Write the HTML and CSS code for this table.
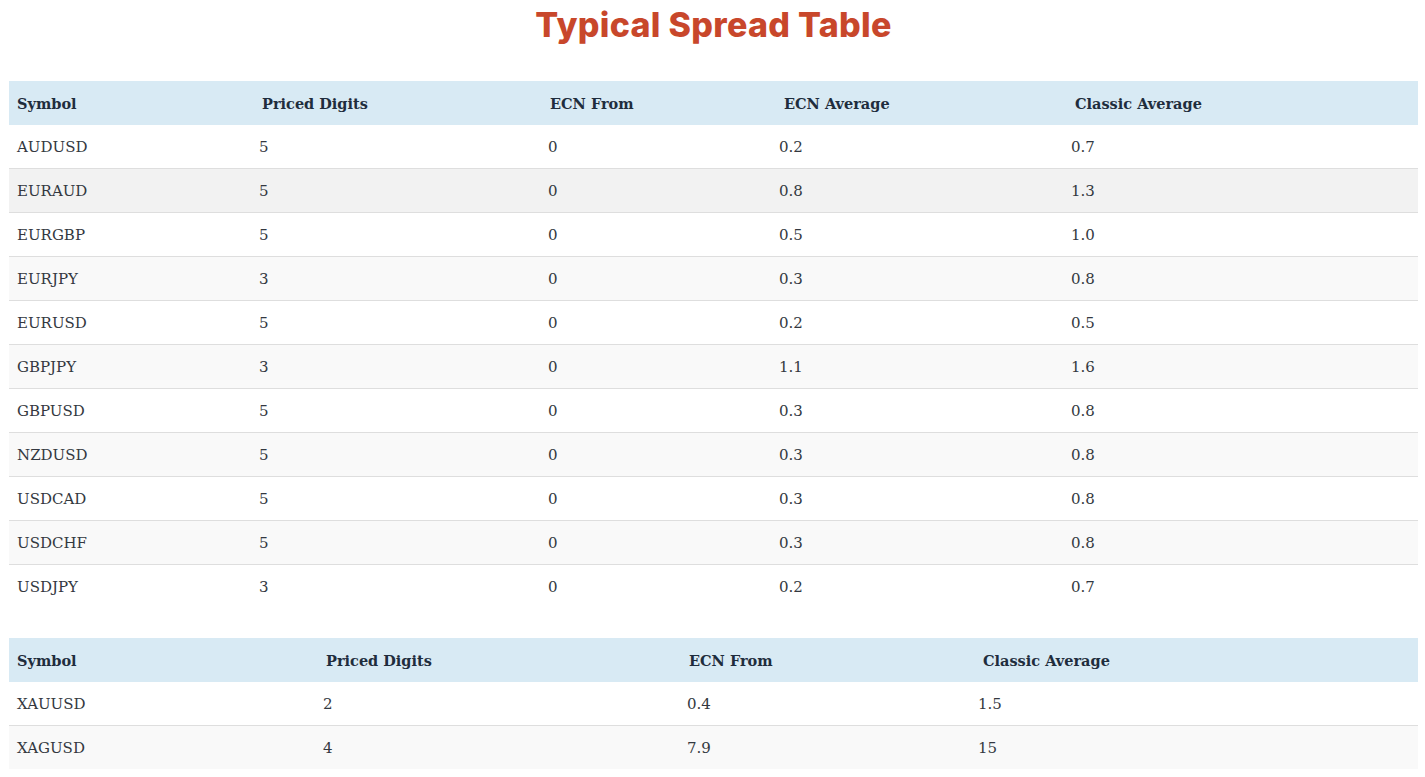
FILE: index.html
```html
<!DOCTYPE html>
<html lang="en">
<head>
<meta charset="utf-8">
<title>Typical Spread Table</title>
<link rel="stylesheet" href="styles.css">
</head>
<body>
<h1 class="title">Typical Spread Table</h1>
<table class="spread spread-fx">
  <thead>
    <tr><th>Symbol</th><th>Priced Digits</th><th>ECN From</th><th>ECN Average</th><th>Classic Average</th></tr>
  </thead>
  <tbody>
    <tr><td>AUDUSD</td><td>5</td><td>0</td><td>0.2</td><td>0.7</td></tr>
    <tr class="hl"><td>EURAUD</td><td>5</td><td>0</td><td>0.8</td><td>1.3</td></tr>
    <tr><td>EURGBP</td><td>5</td><td>0</td><td>0.5</td><td>1.0</td></tr>
    <tr class="alt"><td>EURJPY</td><td>3</td><td>0</td><td>0.3</td><td>0.8</td></tr>
    <tr><td>EURUSD</td><td>5</td><td>0</td><td>0.2</td><td>0.5</td></tr>
    <tr class="alt"><td>GBPJPY</td><td>3</td><td>0</td><td>1.1</td><td>1.6</td></tr>
    <tr><td>GBPUSD</td><td>5</td><td>0</td><td>0.3</td><td>0.8</td></tr>
    <tr class="alt"><td>NZDUSD</td><td>5</td><td>0</td><td>0.3</td><td>0.8</td></tr>
    <tr><td>USDCAD</td><td>5</td><td>0</td><td>0.3</td><td>0.8</td></tr>
    <tr class="alt"><td>USDCHF</td><td>5</td><td>0</td><td>0.3</td><td>0.8</td></tr>
    <tr><td>USDJPY</td><td>3</td><td>0</td><td>0.2</td><td>0.7</td></tr>
  </tbody>
</table>
<table class="spread spread-metals">
  <thead>
    <tr><th>Symbol</th><th>Priced Digits</th><th>ECN From</th><th>Classic Average</th></tr>
  </thead>
  <tbody>
    <tr><td>XAUUSD</td><td>2</td><td>0.4</td><td>1.5</td></tr>
    <tr class="alt"><td>XAGUSD</td><td>4</td><td>7.9</td><td>15</td></tr>
  </tbody>
</table>
</body>
</html>
```
FILE: styles.css
```css
html, body {
  margin: 0;
  padding: 0;
  background: #ffffff;
}
body {
  padding: 0 7px 0 9px;
  font-family: "DejaVu Serif", "Liberation Serif", serif;
  color: #333840;
}
.title {
  margin: 0;
  height: 49px;
  text-align: center;
  font-family: "Inter", "Open Sans", sans-serif;
  font-weight: 800;
  font-size: 34px;
  line-height: 49px;
  color: #c8472b;
  letter-spacing: 0.3px;
}
.spread {
  width: 100%;
  border-collapse: collapse;
  table-layout: fixed;
  font-size: 15px;
}
.spread th,
.spread td {
  box-sizing: border-box;
}
.spread-fx {
  margin-top: 32px;
}
.spread-metals {
  margin-top: 30px;
}
.spread th {
  height: 44px;
  padding: 0 8px;
  text-align: left;
  background: #d8eaf4;
  color: #1f2d3d;
  font-weight: bold;
  font-size: 14.5px;
}
.spread td {
  height: 44px;
  padding: 2px 8px 0;
  text-align: left;
  border-top: 1px solid #dedede;
}
.spread tbody tr:first-child td {
  border-top: none;
  height: 43px;
}
.spread tr.alt td {
  background: #f9f9f9;
}
.spread tr.hl td {
  background: #f2f2f2;
}
.spread-fx th:nth-child(1) { width: 242px; }
.spread-fx th:nth-child(2) { width: 289px; padding-left: 11px; }
.spread-fx th:nth-child(3) { width: 231px; padding-left: 10px; }
.spread-fx th:nth-child(4) { width: 292px; padding-left: 13px; }
.spread-fx th:nth-child(5) { padding-left: 12px; }
.spread-metals th:nth-child(1) { width: 306px; }
.spread-metals th:nth-child(2) { width: 364px; padding-left: 11px; }
.spread-metals th:nth-child(3) { width: 291px; padding-left: 10px; }
.spread-metals th:nth-child(4) { padding-left: 13px; }
```
